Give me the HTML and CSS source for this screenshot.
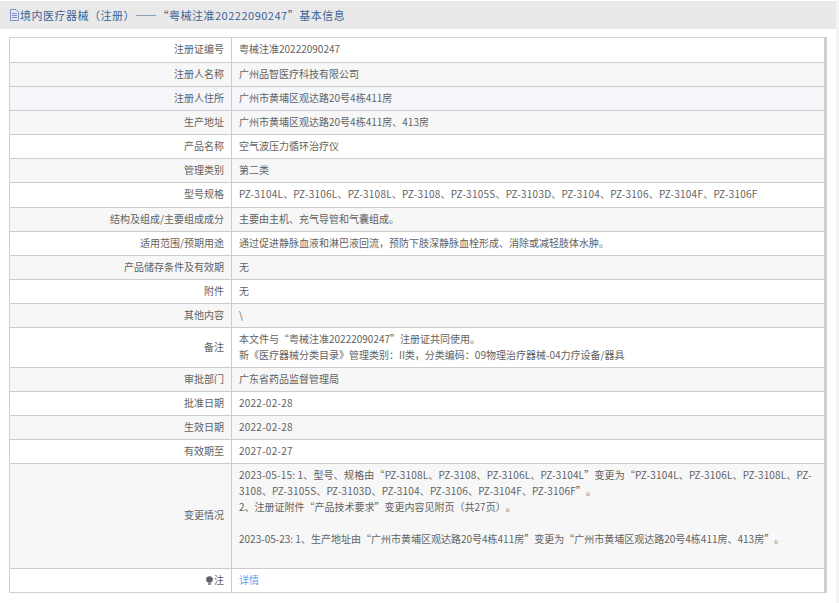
FILE: index.html
```html
<!DOCTYPE html>
<html lang="zh-CN">
<head>
    <meta charset="UTF-8">
    <title>境内医疗器械（注册）基本信息</title>
    <link rel="stylesheet" href="styles.css">
</head>
<body>
    <div class="panel">
        <div class="title">
            <svg class="doc-icon" width="9" height="12" viewBox="0 0 9 12"><path d="M.5.5h5.500l2.500 2.500v8.500h-8zM2 4.500h5M2 6.500h5M2 8.500h5" fill="none" stroke="#7d8fc4"/></svg>
            <span>境内医疗器械（注册）——“粤械注准20222090247”基本信息</span>
        </div>
        <div class="table-wrap">
            <table class="info">
                <tr class="tall"><td class="label">注册证编号</td><td>粤械注准20222090247</td></tr>
                <tr><td class="label">注册人名称</td><td>广州品智医疗科技有限公司</td></tr>
                <tr class="hover"><td class="label">注册人住所</td><td>广州市黄埔区观达路20号4栋411房</td></tr>
                <tr><td class="label">生产地址</td><td>广州市黄埔区观达路20号4栋411房、413房</td></tr>
                <tr><td class="label">产品名称</td><td>空气波压力循环治疗仪</td></tr>
                <tr><td class="label">管理类别</td><td>第二类</td></tr>
                <tr class="tall"><td class="label">型号规格</td><td class="codes">PZ-3104L、PZ-3106L、PZ-3108L、PZ-3108、PZ-3105S、PZ-3103D、PZ-3104、PZ-3106、PZ-3104F、PZ-3106F</td></tr>
                <tr><td class="label">结构及组成/主要组成成分</td><td>主要由主机、充气导管和气囊组成。</td></tr>
                <tr><td class="label">适用范围/预期用途</td><td>通过促进静脉血液和淋巴液回流，预防下肢深静脉血栓形成、消除或减轻肢体水肿。</td></tr>
                <tr><td class="label">产品储存条件及有效期</td><td>无</td></tr>
                <tr><td class="label">附件</td><td>无</td></tr>
                <tr><td class="label">其他内容</td><td>\</td></tr>
                <tr><td class="label">备注</td><td>本文件与“粤械注准20222090247”注册证共同使用。<br>新《医疗器械分类目录》管理类别：II类，分类编码：09物理治疗器械-04力疗设备/器具</td></tr>
                <tr><td class="label">审批部门</td><td>广东省药品监督管理局</td></tr>
                <tr><td class="label">批准日期</td><td class="codes">2022-02-28</td></tr>
                <tr><td class="label">生效日期</td><td class="codes">2022-02-28</td></tr>
                <tr><td class="label">有效期至</td><td class="codes">2027-02-27</td></tr>
                <tr class="tall"><td class="label">变更情况</td><td><span class="change">2023-05-15: 1、型号、规格由“PZ-3108L、PZ-3108、PZ-3106L、PZ-3104L”变更为“PZ-3104L、PZ-3106L、PZ-3108L、PZ-3108、PZ-3105S、PZ-3103D、PZ-3104、PZ-3106、PZ-3104F、PZ-3106F”。</span><br>2、注册证附件“产品技术要求”变更内容见附页（共27页）。<br><br>2023-05-23: 1、生产地址由“广州市黄埔区观达路20号4栋411房”变更为“广州市黄埔区观达路20号4栋411房、413房”。<br><br></td></tr>
                <tr>
                    <td class="label"><svg class="bulb-icon" width="7" height="9" viewBox="0 0 7 9"><circle cx="3.500" cy="3.500" r="3.300" fill="#5f636c"/><path d="M2.200 6.500h2.600v2.500h-2.600z" fill="#7d8087"/></svg>注</td>
                    <td><a class="more" href="#">详情</a></td>
                </tr>
            </table>
        </div>
    </div>
</body>
</html>
```

FILE: styles.css
```css
body {
    margin: 0;
    background-color: #f4f4f4;
    font-family: "Noto Sans CJK SC", sans-serif;
    font-feature-settings: "chws" 0, "halt" 0, "palt" 0;
    color: #626262;
    text-spacing-trim: space-all;
}
.panel {
    width: 836px;
    height: 603px;
    padding-top: 1px;
    box-sizing: border-box;
    background-color: #fff;
}
.title {
    display: flex;
    align-items: center;
    gap: 1px;
    height: 28px;
    padding-left: 10px;
    background-color: #e9e9e9;
    color: #3a6496;
    font-size: 11px;
    letter-spacing: 0.5px;
}
.table-wrap {
    padding: 8px 0 0 9px;
}
.info {
    width: 818px;
    table-layout: fixed;
    border-collapse: separate;
    border-spacing: 0;
    border: 1px solid #d0d0d0;
    border-right-width: 3px;
    font-size: 10px;
}
.info td {
    padding: 3px 7px 4px;
    line-height: 16px;
    border-left: 1px solid #ccc;
    border-bottom: 1px solid #ccc;
}
.info tr.tall td {
    padding-bottom: 5px;
}
.info tr:last-child td {
    border-bottom: 0;
}
.info tr:nth-child(even) {
    background-color: #f7f7f7;
}
.info tr.hover {
    background-color: #f5f6fa;
}
.info td.label {
    width: 207px;
    padding-right: 7px;
    border-left: 0;
    text-align: right;
}
.codes {
    letter-spacing: 0.24px;
}
.change {
    letter-spacing: 0.18px;
}
.bulb-icon {
    margin-right: 1px;
    vertical-align: -1px;
}
.more {
    color: #5b9cf5;
    text-decoration: none;
}
```
